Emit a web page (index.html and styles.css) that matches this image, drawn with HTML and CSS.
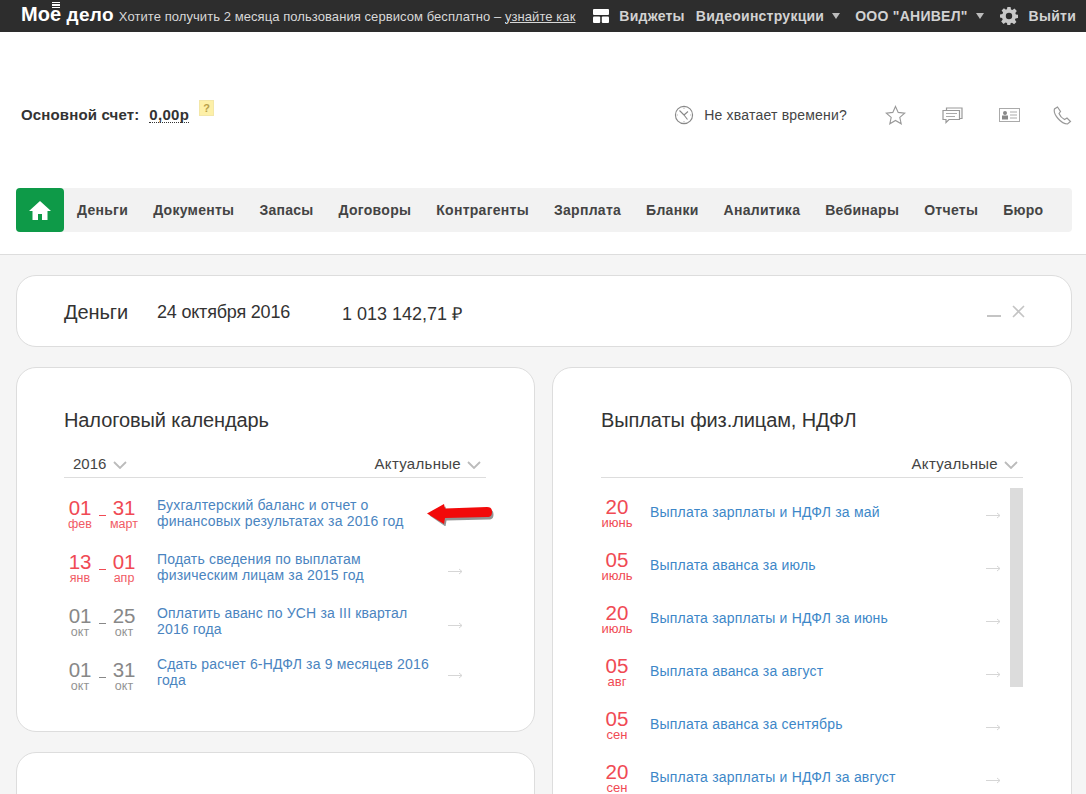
FILE: index.html
```html
<!DOCTYPE html>
<html lang="ru">
<head>
<meta charset="utf-8">
<title>Моё дело</title>
<link rel="stylesheet" href="styles.css">
</head>
<body>
<div class="topbar">
  <div class="logo"><span class="logo-first">Мо<span class="logo-e">е<i class="logo-bars"></i></span></span> <span class="logo-second">дело</span></div>
  <div class="promo">Хотите получить 2 месяца пользования сервисом бесплатно – <a href="#">узнайте как</a></div>
  <div class="top-right">
    <svg class="i-widgets" width="16" height="14" viewBox="0 0 16 14"><rect x="0" y="0" width="16" height="6" rx="1" fill="#fff"/><rect x="0" y="7.5" width="7.2" height="6.5" rx="1" fill="#fff"/><rect x="8.8" y="7.5" width="7.2" height="6.5" rx="1" fill="#fff"/></svg>
    <a class="top-link l-widgets" href="#">Виджеты</a>
    <a class="top-link l-video" href="#">Видеоинструкции</a><span class="caret c-video"></span>
    <a class="top-link l-org" href="#">ООО "АНИВЕЛ"</a><span class="caret c-org"></span>
    <svg class="i-gear" width="18" height="18" viewBox="0 0 18 18"><path fill="#c9c9c9" fill-rule="evenodd" d="M7.4 0h3.2l.4 2.5 1.4.6 2.1-1.5 2.3 2.3-1.5 2.1.6 1.4 2.1.4v3.2l-2.5.4-.6 1.4 1.5 2.1-2.3 2.3-2.1-1.5-1.4.6-.4 2.1H7.4L7 16l-1.4-.6-2.1 1.5-2.3-2.3 1.5-2.1-.6-1.4L0 10.6V7.4L2.5 7l.6-1.4-1.5-2.1 2.3-2.3 2.1 1.5L7 2.1zM9 5.8a3.2 3.2 0 1 0 0 6.4 3.2 3.2 0 0 0 0-6.4z"/></svg>
    <a class="top-link l-exit" href="#">Выйти</a>
  </div>
</div>

<header class="header">
  <div class="account-row">
    <div class="account">
      <span class="acc-label">Основной счет:</span>
      <span class="acc-value">0,00р</span>
      <span class="acc-help">?</span>
    </div>
    <div class="tools">
      <svg class="t-clock" width="20" height="20" viewBox="0 0 20 20" fill="none" stroke="#888" stroke-width="1.1"><circle cx="10" cy="10" r="8.6"/><path d="M10 10 5.5 5.5M10 10l4-3.5M10 10l3.5 4.5"/><path d="M10 2.5v1.5M10 16v1.5M2.5 10H4M16 10h1.5" stroke="#bbb"/></svg>
      <span class="t-text">Не хватает времени?</span>
      <svg class="t-star" width="21" height="20" viewBox="0 0 21 20" fill="none" stroke="#999" stroke-width="1.1"><path d="M10.5 1.4l2.7 6 6.5.7-4.9 4.3 1.4 6.4-5.7-3.3-5.7 3.3 1.4-6.4L1.3 8.1l6.5-.7z"/></svg>
      <svg class="t-chat" width="21" height="17" viewBox="0 0 21 17" fill="none" stroke="#999" stroke-width="1.2"><path d="M4.500 3V1h15.500v10.500h-2"/><path d="M1 3.500h16.500v9H7l-3 3v-3H1z"/><path d="M4 6.500h11M4 9.500h9" stroke="#aaa"/></svg>
      <svg class="t-card" width="21" height="14" viewBox="0 0 21 14"><rect x=".5" y=".5" width="20" height="13" fill="none" stroke="#aaa"/><circle cx="6" cy="5" r="2" fill="#888"/><rect x="3" y="7.500" width="6" height="4" fill="#888"/><path d="M11 4h7M11 7h7M11 10h7" stroke="#aaa"/></svg>
      <svg class="t-phone" width="19" height="19" viewBox="0 0 19 19" fill="none" stroke="#999" stroke-width="1.2"><path d="M4.500 1 1.500 3c-.8 2.500.5 6 3.500 9.500s6.500 5.500 9.500 5.500l3-2.500-3.500-3.500-2.500 1.500C9.500 12.500 7 10 6 7.500L7.500 5.500z"/></svg>
    </div>
  </div>
  <nav class="nav">
    <a class="home" href="#"><svg width="22" height="19" viewBox="0 0 22 19"><path fill="#fff" d="M11 0 0 10h3.500v9h5.500v-6h4v6h5.500v-9H22z"/></svg></a>
    <a href="#">Деньги</a><a href="#">Документы</a><a href="#">Запасы</a><a href="#">Договоры</a><a href="#">Контрагенты</a><a href="#">Зарплата</a><a href="#">Бланки</a><a href="#">Аналитика</a><a href="#">Вебинары</a><a href="#">Отчеты</a><a href="#">Бюро</a>
  </nav>
</header>

<main class="main">
  <section class="card money">
    <h2 class="money-title">Деньги</h2>
    <span class="money-date">24 октября 2016</span>
    <span class="money-sum">1 013 142,71 ₽</span>
    <span class="money-actions">
      <i class="minimize"></i>
      <svg width="13" height="13" viewBox="0 0 13 13" stroke="#c4c4c4" stroke-width="1.600"><path d="M1 1l11 11M12 1 1 12"/></svg>
    </span>
  </section>

  <div class="columns">
    <div class="col">
      <section class="card tax">
        <h2 class="card-title">Налоговый календарь</h2>
        <div class="filter">
          <span class="flt flt-year">2016<svg class="chev" width="14" height="8" viewBox="0 0 14 8"><path d="M1 1l6 6 6-6" fill="none" stroke="#bbb" stroke-width="1.800"/></svg></span>
          <span class="flt">Актуальные<svg class="chev" width="14" height="8" viewBox="0 0 14 8"><path d="M1 1l6 6 6-6" fill="none" stroke="#bbb" stroke-width="1.800"/></svg></span>
        </div>
        <div class="tax-list">
          <div class="tax-row red">
            <div class="range"><div class="d"><b>01</b><small>фев</small></div><span class="dash"></span><div class="d"><b>31</b><small>март</small></div></div>
            <a class="tax-link" href="#">Бухгалтерский баланс и отчет о финансовых результатах за 2016 год</a>
            <svg class="red-arrow" width="68" height="22" viewBox="0 0 68 22"><path d="M1 10 17 1l1 4.500 42-1.500c4 0 5 2 5 5s-1 5-5 5L18 15l-1 6z" fill="#3a3a3a" opacity=".55" transform="translate(1.500 1.500)"/><path d="M0 9.500 17 0l1 4.500 42-1.500c4 0 5 2 5 5s-1 5-5 5L18 14l-1 6z" fill="#f20a0a"/></svg>
          </div>
          <div class="tax-row red">
            <div class="range"><div class="d"><b>13</b><small>янв</small></div><span class="dash"></span><div class="d"><b>01</b><small>апр</small></div></div>
            <a class="tax-link" href="#">Подать сведения по выплатам физическим лицам за 2015 год</a>
            <svg class="go" width="15" height="7" viewBox="0 0 15 7"><path d="M0 3.500h14M11 1l3 2.500L11 6" fill="none" stroke="#d6d6d6"/></svg>
          </div>
          <div class="tax-row grey">
            <div class="range"><div class="d"><b>01</b><small>окт</small></div><span class="dash"></span><div class="d"><b>25</b><small>окт</small></div></div>
            <a class="tax-link" href="#">Оплатить аванс по УСН за III квартал 2016 года</a>
            <svg class="go" width="15" height="7" viewBox="0 0 15 7"><path d="M0 3.500h14M11 1l3 2.500L11 6" fill="none" stroke="#d6d6d6"/></svg>
          </div>
          <div class="tax-row grey">
            <div class="range"><div class="d"><b>01</b><small>окт</small></div><span class="dash"></span><div class="d"><b>31</b><small>окт</small></div></div>
            <a class="tax-link" href="#">Сдать расчет 6-НДФЛ за 9 месяцев 2016 года</a>
            <svg class="go" width="15" height="7" viewBox="0 0 15 7"><path d="M0 3.500h14M11 1l3 2.500L11 6" fill="none" stroke="#d6d6d6"/></svg>
          </div>
        </div>
      </section>
      <section class="card stub"></section>
    </div>
    <div class="col">
      <section class="card pay">
        <h2 class="card-title">Выплаты физ.лицам, НДФЛ</h2>
        <div class="filter filter-end">
          <span class="flt">Актуальные<svg class="chev" width="14" height="8" viewBox="0 0 14 8"><path d="M1 1l6 6 6-6" fill="none" stroke="#bbb" stroke-width="1.800"/></svg></span>
        </div>
        <div class="pay-wrap">
          <div class="pay-list">
            <div class="pay-row"><div class="pd"><b>20</b><small>июнь</small></div><a href="#">Выплата зарплаты и НДФЛ за май</a><svg class="go" width="15" height="7" viewBox="0 0 15 7"><path d="M0 3.500h14M11 1l3 2.500L11 6" fill="none" stroke="#d6d6d6"/></svg></div>
            <div class="pay-row"><div class="pd"><b>05</b><small>июль</small></div><a href="#">Выплата аванса за июль</a><svg class="go" width="15" height="7" viewBox="0 0 15 7"><path d="M0 3.500h14M11 1l3 2.500L11 6" fill="none" stroke="#d6d6d6"/></svg></div>
            <div class="pay-row"><div class="pd"><b>20</b><small>июль</small></div><a href="#">Выплата зарплаты и НДФЛ за июнь</a><svg class="go" width="15" height="7" viewBox="0 0 15 7"><path d="M0 3.500h14M11 1l3 2.500L11 6" fill="none" stroke="#d6d6d6"/></svg></div>
            <div class="pay-row"><div class="pd"><b>05</b><small>авг</small></div><a href="#">Выплата аванса за август</a><svg class="go" width="15" height="7" viewBox="0 0 15 7"><path d="M0 3.500h14M11 1l3 2.500L11 6" fill="none" stroke="#d6d6d6"/></svg></div>
            <div class="pay-row"><div class="pd"><b>05</b><small>сен</small></div><a href="#">Выплата аванса за сентябрь</a><svg class="go" width="15" height="7" viewBox="0 0 15 7"><path d="M0 3.500h14M11 1l3 2.500L11 6" fill="none" stroke="#d6d6d6"/></svg></div>
            <div class="pay-row"><div class="pd"><b>20</b><small>сен</small></div><a href="#">Выплата зарплаты и НДФЛ за август</a><svg class="go" width="15" height="7" viewBox="0 0 15 7"><path d="M0 3.500h14M11 1l3 2.500L11 6" fill="none" stroke="#d6d6d6"/></svg></div>
          </div>
          <div class="scroll"><div class="thumb"></div></div>
        </div>
      </section>
    </div>
  </div>
</main>
</body>
</html>
```
FILE: styles.css
```css
* { box-sizing: border-box; }
html, body { margin: 0; padding: 0; height: 794px; overflow: hidden; }
body { background: #f5f5f5; font-family: "Liberation Sans", Arial, sans-serif; color: #333; }
a { text-decoration: none; color: inherit; }
h2 { margin: 0; font-weight: normal; }

.topbar { height: 32px; background: #2d2d2d; display: flex; align-items: center; padding-left: 21px; color: #ddd; }
.logo { font-weight: bold; color: #fff; font-size: 20px; white-space: nowrap; margin-top: -3px; }
.logo-e { position: relative; display: inline-block; }
.logo-bars { position: absolute; left: 2px; top: -1px; width: 8px; height: 6px; background: repeating-linear-gradient(#fff 0 1.2px, transparent 1.2px 2.4px); }
.logo-second { letter-spacing: .3px; font-size: 19px; }
.promo { margin-left: 5px; font-size: 13px; letter-spacing: .07px; color: #d8d8d8; white-space: nowrap; }
.promo a { text-decoration: underline; }
.top-right { margin-left: auto; display: flex; align-items: center; padding-right: 10px; }
.top-link { font-size: 14px; font-weight: bold; color: #d2d2d2; letter-spacing: .25px; white-space: nowrap; margin-top: -1px; }
.i-widgets { margin-right: 10px; }
.l-video { margin-left: 11px; }
.caret { width: 0; height: 0; border-left: 4px solid transparent; border-right: 4px solid transparent; border-top: 6px solid #bbb; margin-left: 8px; }
.l-org { margin-left: 15px; }
.i-gear { margin-left: 16px; margin-right: 11px; }

.header { background: #fff; height: 223px; border-bottom: 1px solid #ddd; padding: 0 14px 0 16px; }
.account-row { height: 156px; display: flex; align-items: flex-start; justify-content: space-between; padding-top: 68px; }
.account { display: flex; align-items: center; padding-left: 5px; height: 30px; font-size: 15px; font-weight: bold; color: #333; letter-spacing: .15px; position: relative; }
.acc-label { margin-top: -1px; }
.acc-value { margin-left: 10px; margin-top: -1px; border-bottom: 1px dotted #333; line-height: 15px; font-size: 15px; letter-spacing: .3px; }
.acc-help { width: 15px; height: 16px; margin-left: 10px; margin-top: -14px; background: #fdf0a8; border: 1px solid #f3e7a8; color: #b9a04a; font-size: 11px; line-height: 14px; text-align: center; font-weight: bold; letter-spacing: 0; }
.tools { display: flex; align-items: center; height: 30px; }
.t-text { font-size: 14px; letter-spacing: .2px; color: #444; margin-left: 10px; margin-right: 38px; }
.t-star { margin-right: 36px; }
.t-chat { margin-right: 36px; }
.t-card { margin-right: 33px; }
.t-phone { margin-right: 0; }

.nav { height: 44px; background: #f2f2f2; display: flex; align-items: center; border-radius: 4px; }
.nav a { font-size: 14px; font-weight: bold; color: #444; letter-spacing: .28px; margin-right: 25px; white-space: nowrap; }
.nav a.home { width: 48px; height: 44px; background: #0e9a48; border-radius: 4px; margin-right: 13px; display: flex; align-items: center; justify-content: center; }

.main { padding: 20px 14px 0 16px; }
.card { background: #fff; border: 1px solid #ddd; border-radius: 20px; }
.money { height: 72px; display: flex; align-items: center; padding: 2px 47px 0; font-size: 18px; color: #333; }
.money-title { font-size: 20px; width: 93px; letter-spacing: -.1px; }
.money-date { width: 185px; letter-spacing: -.2px; margin-top: 1px; }
.money-sum { margin-top: 1px; }
.money-actions { margin-left: auto; margin-top: -2px; display: flex; align-items: center; gap: 11px; margin-right: -1px; }
.minimize { width: 14px; height: 2px; background: #c4c4c4; margin-top: 10px; }

.columns { display: flex; gap: 17px; margin-top: 20px; }
.col { display: flex; flex-direction: column; gap: 20px; }
.col:first-child { width: 519px; }
.col:last-child { width: 520px; }
.tax { height: 365px; padding: 40px 48px 0 47px; }
.pay { height: 500px; padding: 40px 48px 0 48px; }
.stub { height: 100px; }
.card-title { font-size: 20px; line-height: 24px; color: #333; letter-spacing: -.1px; }
.filter { display: flex; justify-content: space-between; margin-top: 23px; height: 23px; border-bottom: 1px solid #ddd; padding: 0 5px 0 9px; }
.filter-end { justify-content: flex-end; }
.flt { font-size: 15px; line-height: 18px; letter-spacing: .3px; color: #444; display: inline-flex; align-items: center; height: 18px; }
.flt-year { letter-spacing: 0; }
.flt-year .chev { margin-left: 7px; }
.chev { margin-left: 6px; margin-top: 2px; }

.tax-list { padding-top: 8px; }
.tax-row { height: 54px; display: flex; align-items: center; position: relative; }
.tax-row:last-child { margin-top: -3px; }
.range { width: 93px; display: flex; flex: none; align-items: flex-start; margin-top: 2px; }
.tax-row:last-child .range { margin-top: 8px; }
.d { text-align: center; width: 32px; }
.d b { display: block; font-weight: normal; font-size: 20.500px; line-height: 20px; letter-spacing: -.2px; }
.d small { display: block; font-size: 12.500px; line-height: 12px; opacity: .9; }
.dash { width: 7px; height: 1px; background: currentColor; margin: 17px 2px 0 3px; }
.red { color: #f04a54; }
.grey { color: #888; }
.tax-link { font-size: 14px; line-height: 16px; color: #4a84c0; width: 280px; flex: none; letter-spacing: .17px; }
.red-arrow { position: absolute; left: 363px; top: 18px; }
.tax-row .go { position: absolute; left: 384px; top: 28px; }
.tax-row:last-child .go { top: 27px; }

.pay-wrap { display: flex; justify-content: space-between; height: 400px; padding-top: 10px; }
.pay-list { width: 400px; margin-top: -2px; }
.pay-row { height: 53px; display: flex; align-items: center; position: relative; }
.pd { width: 32px; flex: none; margin-right: 17px; margin-top: 1px; text-align: center; color: #f04a54; }
.pd b { display: block; font-weight: normal; font-size: 20.500px; line-height: 19px; }
.pd small { display: block; font-size: 13px; line-height: 13px; }
.pay-row a { font-size: 14px; color: #3d87c8; letter-spacing: .2px; margin-top: -1px; }
.pay-row .go { position: absolute; left: 385px; top: 26px; }
.scroll { width: 13px; }
.thumb { height: 199px; background: #dcdcdc; }
```
